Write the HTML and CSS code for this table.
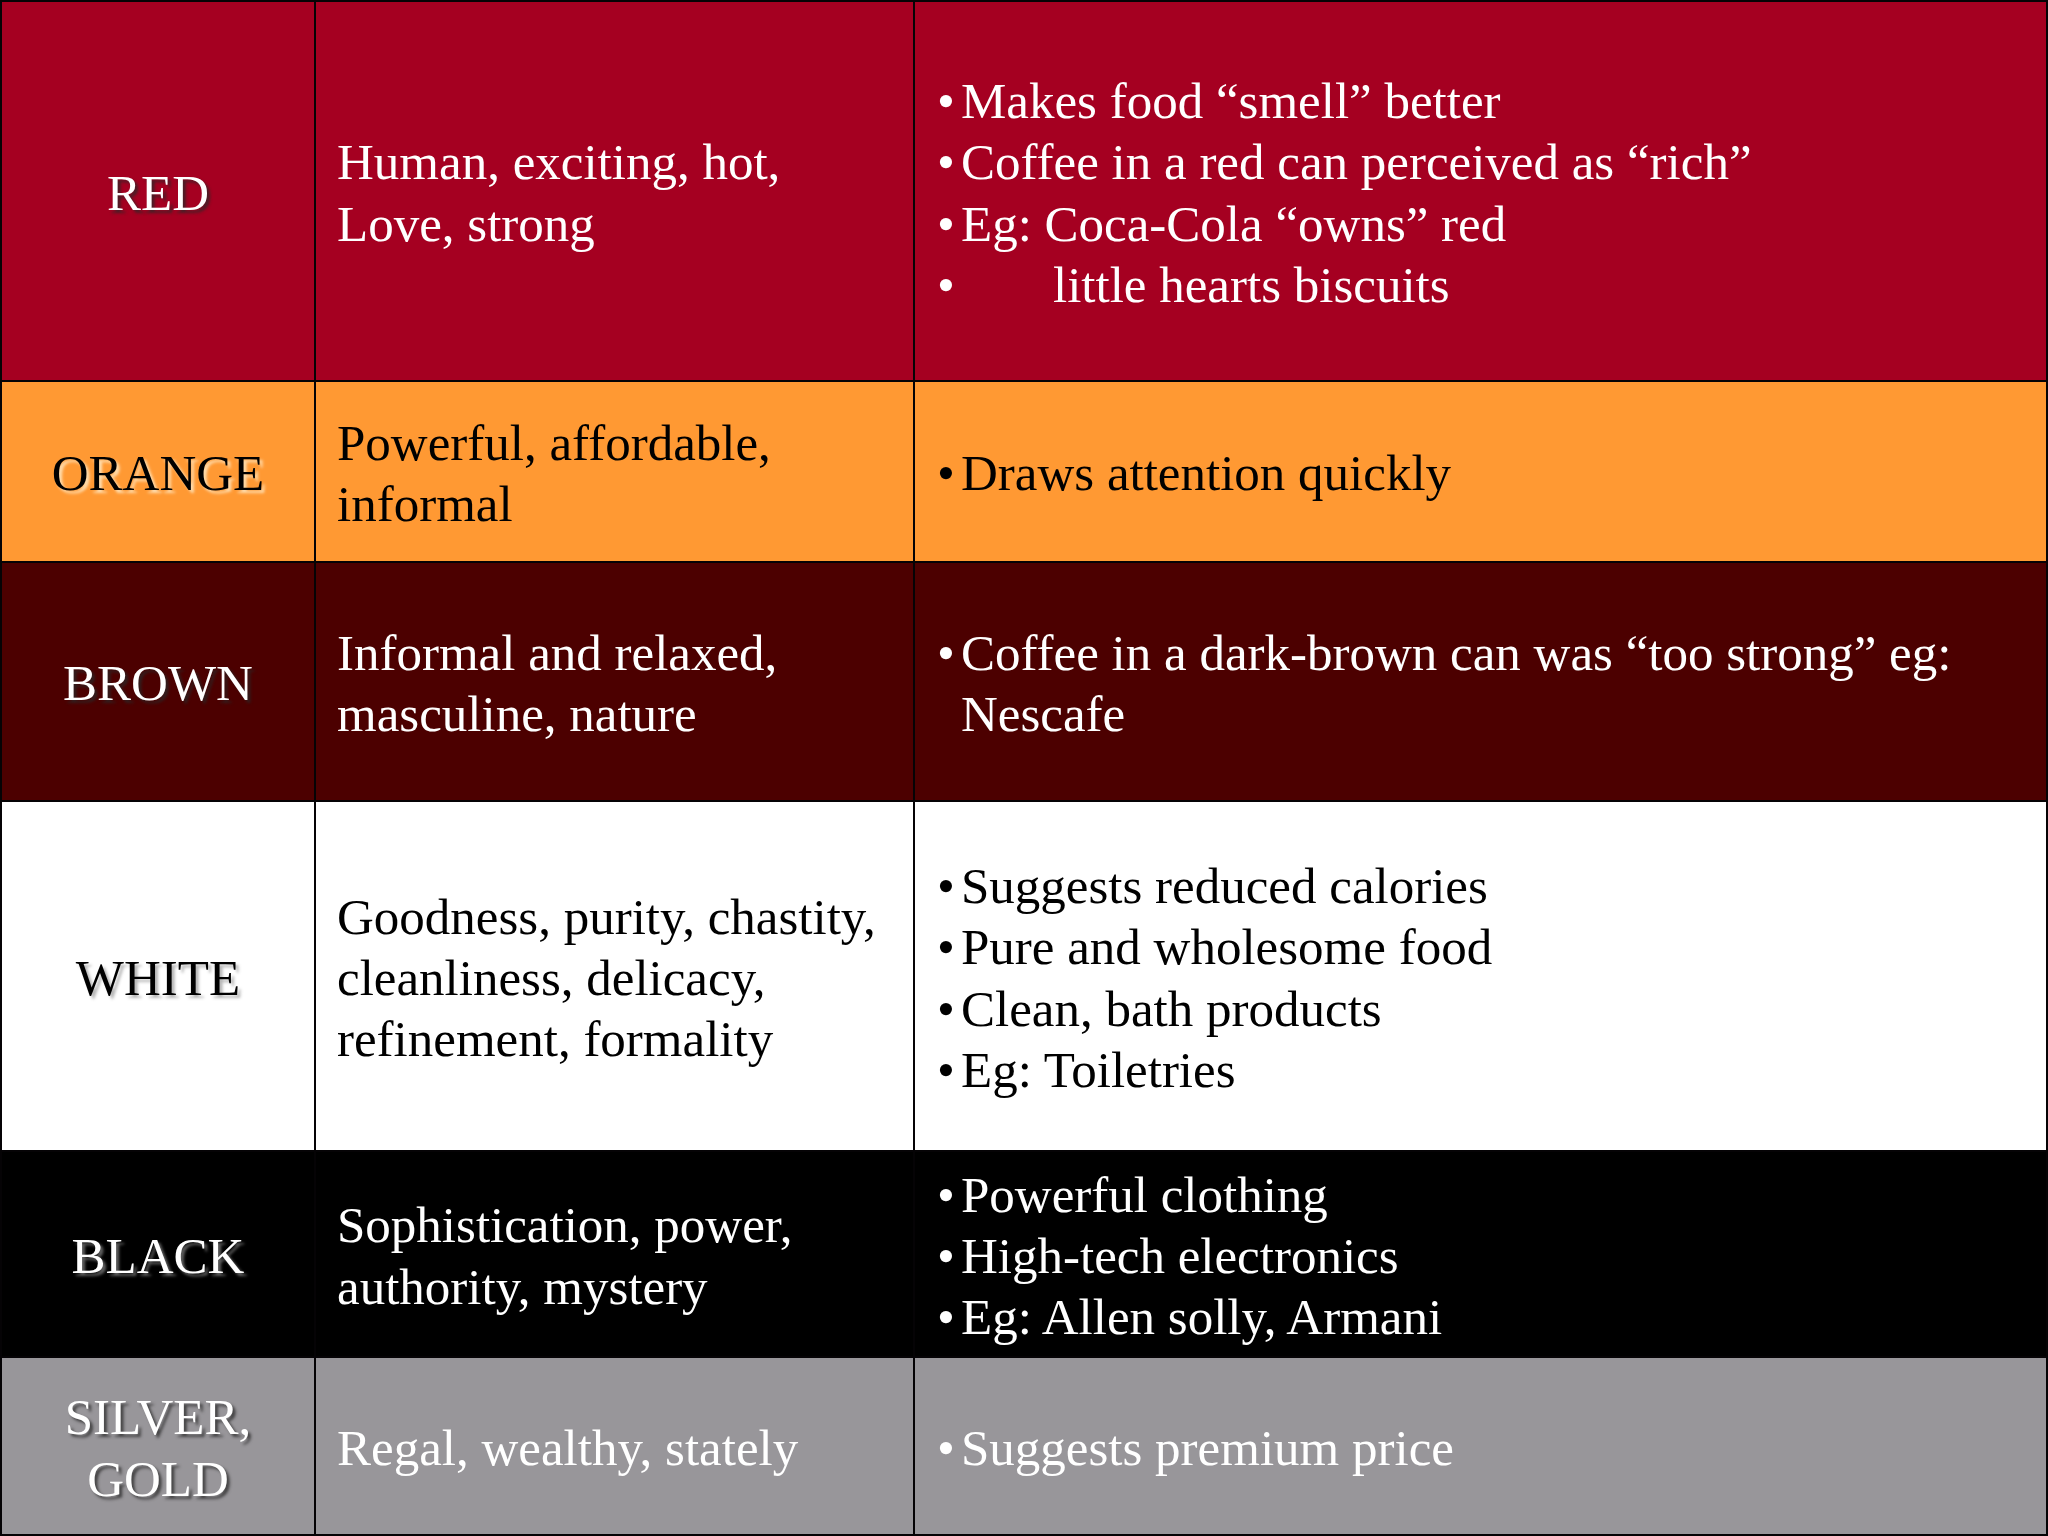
FILE: index.html
```html
<!DOCTYPE html>
<html>
<head>
<meta charset="utf-8">
<link rel="stylesheet" href="styles.css">
</head>
<body>
<div class="table">
  <div class="cell label red">RED</div>
  <div class="cell desc red">Human, exciting, hot,<br>Love, strong</div>
  <div class="cell notes red">
    <ul>
      <li><span class="b">•</span><span>Makes food “smell” better</span></li>
      <li><span class="b">•</span><span>Coffee in a red can perceived as “rich”</span></li>
      <li><span class="b">•</span><span>Eg: Coca-Cola “owns” red</span></li>
      <li><span class="b">•</span><span class="tab">little hearts biscuits</span></li>
    </ul>
  </div>

  <div class="cell label orange">ORANGE</div>
  <div class="cell desc orange">Powerful, affordable,<br>informal</div>
  <div class="cell notes orange">
    <ul>
      <li><span class="b">•</span><span>Draws attention quickly</span></li>
    </ul>
  </div>

  <div class="cell label brown">BROWN</div>
  <div class="cell desc brown">Informal and relaxed,<br>masculine, nature</div>
  <div class="cell notes brown">
    <ul>
      <li><span class="b">•</span><span>Coffee in a dark-brown can was “too strong” eg:<br>Nescafe</span></li>
    </ul>
  </div>

  <div class="cell label white">WHITE</div>
  <div class="cell desc white">Goodness, purity, chastity,<br>cleanliness, delicacy,<br>refinement, formality</div>
  <div class="cell notes white">
    <ul>
      <li><span class="b">•</span><span>Suggests reduced calories</span></li>
      <li><span class="b">•</span><span>Pure and wholesome food</span></li>
      <li><span class="b">•</span><span>Clean, bath products</span></li>
      <li><span class="b">•</span><span>Eg: Toiletries</span></li>
    </ul>
  </div>

  <div class="cell label black">BLACK</div>
  <div class="cell desc black">Sophistication, power,<br>authority, mystery</div>
  <div class="cell notes black">
    <ul>
      <li><span class="b">•</span><span>Powerful clothing</span></li>
      <li><span class="b">•</span><span>High-tech electronics</span></li>
      <li><span class="b">•</span><span>Eg: Allen solly, Armani</span></li>
    </ul>
  </div>

  <div class="cell label gray">SILVER,<br>GOLD</div>
  <div class="cell desc gray">Regal, wealthy, stately</div>
  <div class="cell notes gray">
    <ul>
      <li><span class="b">•</span><span>Suggests premium price</span></li>
    </ul>
  </div>
</div>
</body>
</html>
```

FILE: styles.css
```css
html, body {
  margin: 0;
  padding: 0;
  background: #000;
}
body {
  width: 2048px;
  height: 1536px;
  overflow: hidden;
  font-family: "Liberation Serif", "Times New Roman", serif;
  font-size: 51px;
  line-height: 1.2;
}
.table {
  display: grid;
  grid-template-columns: 312px 597px 1fr;
  grid-template-rows: 378px 179px 237px 348px 204px 176px;
  gap: 2px;
  padding: 2px;
  width: 2048px;
  height: 1536px;
  box-sizing: border-box;
  background: #050305;
}
.cell {
  display: flex;
  align-items: center;
  padding-top: 5px;
  box-sizing: border-box;
  white-space: nowrap;
}
.label {
  justify-content: center;
  text-align: center;
  text-shadow: 3px 3px 3px rgba(40, 40, 40, 0.75);
}
.desc {
  padding-left: 21px;
}
.notes {
  padding-left: 22px;
}
ul {
  list-style: none;
  margin: 0;
  padding: 0;
}
li {
  display: flex;
}
.b {
  width: 24px;
  flex: none;
}
.tab {
  padding-left: 92px;
}
.red { background: #a50021; color: #fff; }
.orange { background: #ff9933; color: #000; }
.brown { background: #4c0000; color: #fff; }
.white { background: #fff; color: #000; }
.black { background: #000; color: #fff; }
.gray { background: #98969a; color: #fff; }
.orange.label { text-shadow: 3px 3px 3px rgba(255, 230, 190, 0.9); }
.white.label { text-shadow: 3px 3px 3px rgba(90, 90, 90, 0.45); }
.black.label { text-shadow: 3px 3px 3px rgba(120, 120, 120, 0.8); }
```
